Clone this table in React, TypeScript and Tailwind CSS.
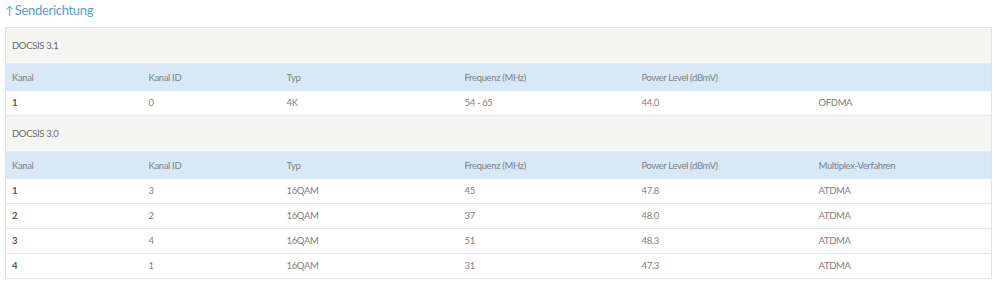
import React from "react";

const widths = [137, 138, 178, 177, 177, 179];

type Row = string[];

function Section({ title, head, rows }: { title: string; head: Row; rows: Row[] }) {
  return (
    <>
      <tr className="bg-[#f5f5f3]">
        <td colSpan={6} className="h-[36px] border-b border-[#e6e6e6] px-[6px] text-[#6a6a6a]">
          {title}
        </td>
      </tr>
      <tr className="bg-[#d9e8f6]">
        {head.map((h, i) => (
          <td key={i} className="h-[27px] px-[6px] text-[#7a8288]">
            {h}
          </td>
        ))}
      </tr>
      {rows.map((r, ri) => (
        <tr key={ri} className="bg-white">
          {r.map((c, i) => (
            <td
              key={i}
              className={
                "h-[25px] border-b border-[#e6e6e6] px-[6px] " +
                (i === 0 ? "font-bold text-[#555]" : "text-[#808080]")
              }
            >
              {c}
            </td>
          ))}
        </tr>
      ))}
    </>
  );
}

export default function App() {
  return (
    <div
      className="h-[281px] w-[999px] bg-white pl-[5px] pt-[2px]"
      style={{ fontFamily: "Lato, 'Open Sans', sans-serif" }}
    >
      <div className="flex h-[17px] items-center text-[13px] leading-none tracking-[-0.3px] text-[#5a9dd0]">
        <span className="mr-[1px] text-[12px]">↑</span>
        <span>Senderichtung</span>
      </div>
      <table className="mt-[8px] w-[986px] table-fixed border-collapse border border-[#e2e2e2] text-[9.5px] leading-none tracking-[-0.35px]">
        <colgroup>
          {widths.map((w, i) => (
            <col key={i} style={{ width: w }} />
          ))}
        </colgroup>
        <tbody>
          <Section
            title="DOCSIS 3.1"
            head={["Kanal", "Kanal ID", "Typ", "Frequenz (MHz)", "Power Level (dBmV)", ""]}
            rows={[["1", "0", "4K", "54 - 65", "44.0", "OFDMA"]]}
          />
          <Section
            title="DOCSIS 3.0"
            head={["Kanal", "Kanal ID", "Typ", "Frequenz (MHz)", "Power Level (dBmV)", "Multiplex-Verfahren"]}
            rows={[
              ["1", "3", "16QAM", "45", "47.8", "ATDMA"],
              ["2", "2", "16QAM", "37", "48.0", "ATDMA"],
              ["3", "4", "16QAM", "51", "48.3", "ATDMA"],
              ["4", "1", "16QAM", "31", "47.3", "ATDMA"],
            ]}
          />
        </tbody>
      </table>
    </div>
  );
}
